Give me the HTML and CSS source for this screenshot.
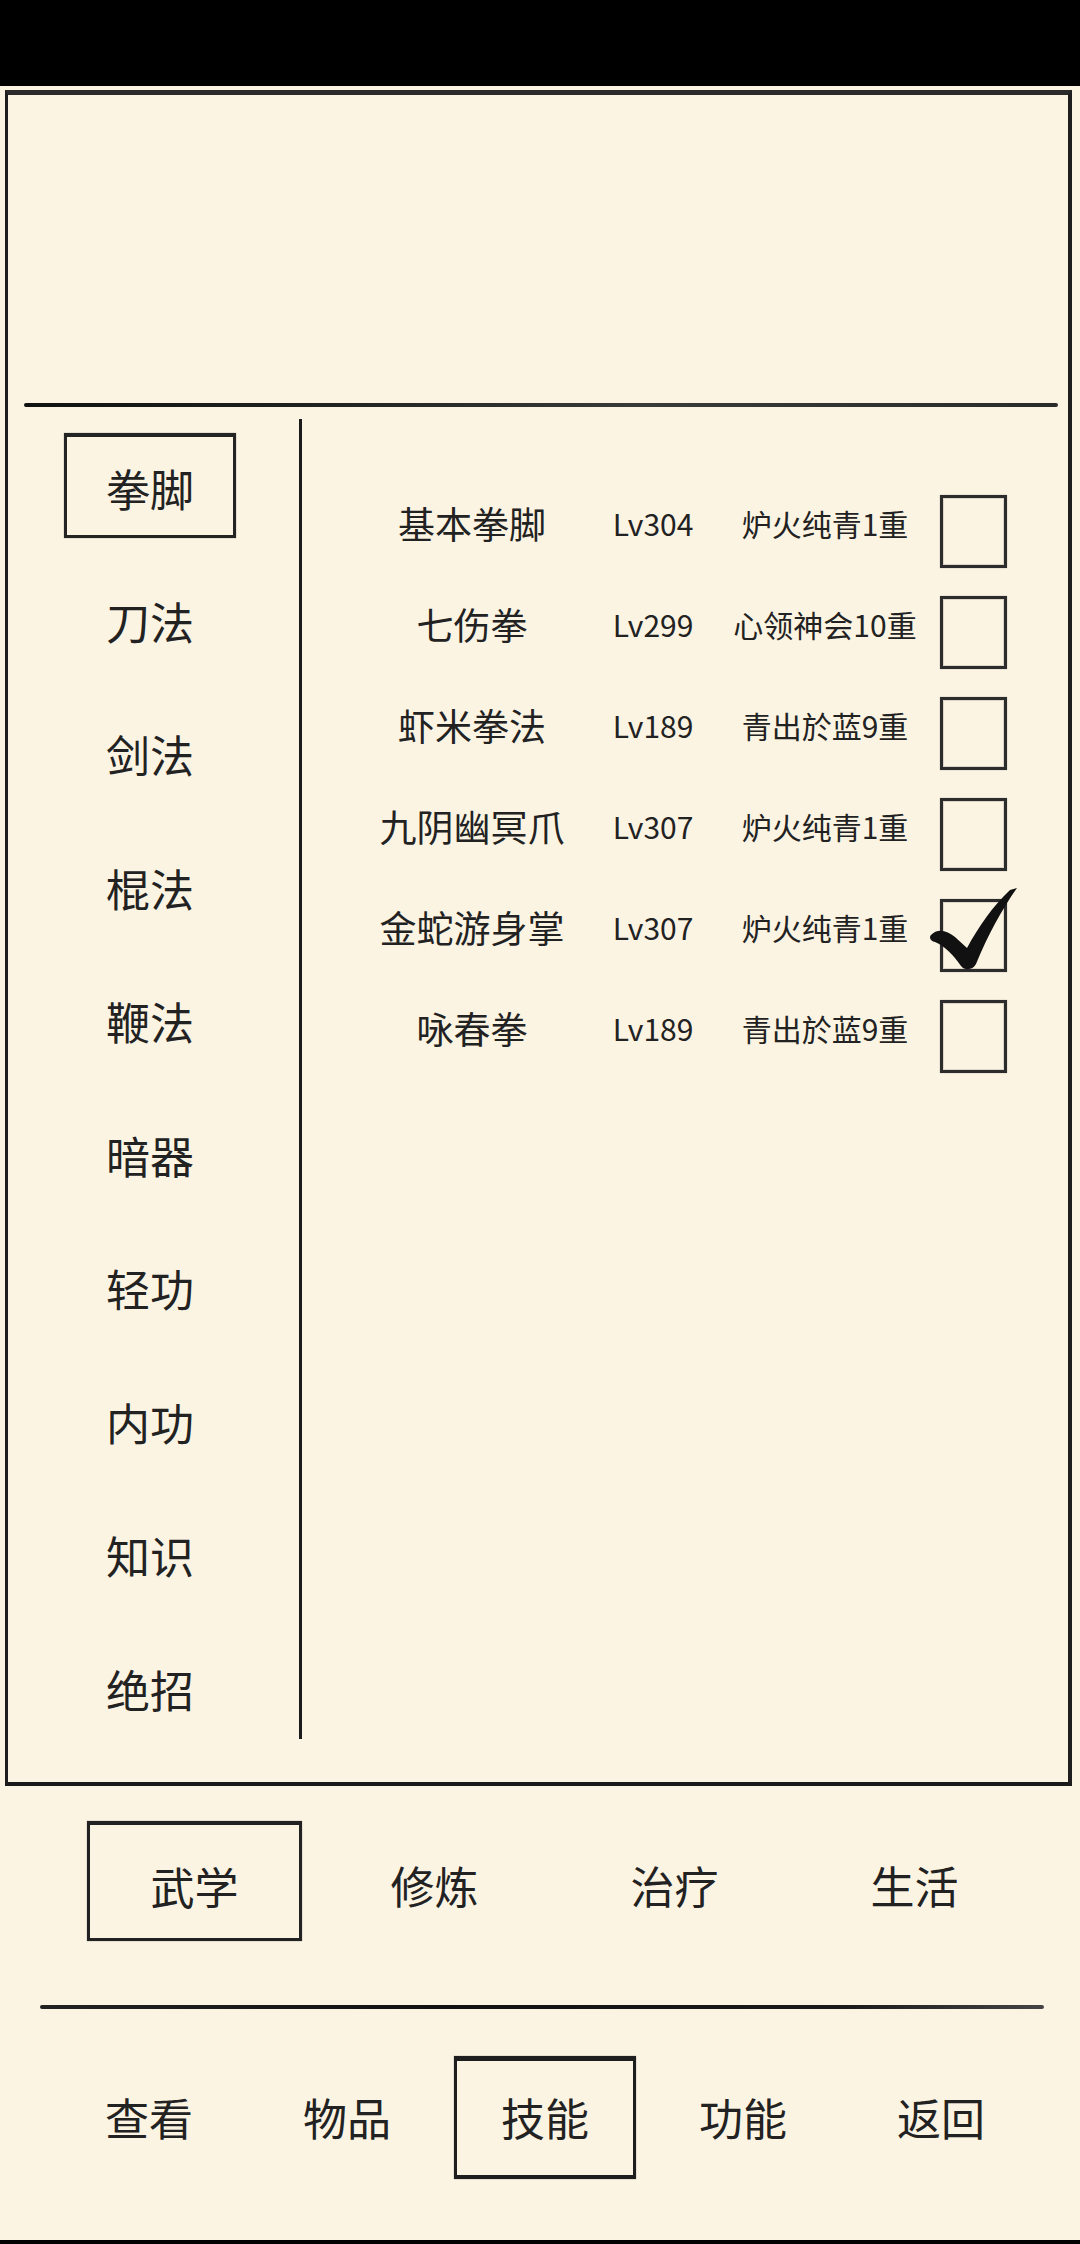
FILE: index.html
```html
<!DOCTYPE html>
<html lang="zh-CN">
<head>
  <meta charset="UTF-8">
  <meta name="viewport" content="width=device-width, initial-scale=1.0">
  <title>技能</title>
  <link rel="stylesheet" href="styles.css">
</head>
<body>
  <div class="status-bar"></div>

  <div class="panel">
    <div class="panel-top"></div>
    <div class="divider"></div>
    <div class="panel-body">
      <div class="category-list">
        <div class="category active">拳脚</div>
        <div class="category">刀法</div>
        <div class="category">剑法</div>
        <div class="category">棍法</div>
        <div class="category">鞭法</div>
        <div class="category">暗器</div>
        <div class="category">轻功</div>
        <div class="category">内功</div>
        <div class="category">知识</div>
        <div class="category">绝招</div>
      </div>
      <div class="skill-list">
        <div class="skill-row">
          <span class="skill-name">基本拳脚</span>
          <span class="skill-level">Lv304</span>
          <span class="skill-realm">炉火纯青1重</span>
          <span class="checkbox"></span>
        </div>
        <div class="skill-row">
          <span class="skill-name">七伤拳</span>
          <span class="skill-level">Lv299</span>
          <span class="skill-realm">心领神会10重</span>
          <span class="checkbox"></span>
        </div>
        <div class="skill-row">
          <span class="skill-name">虾米拳法</span>
          <span class="skill-level">Lv189</span>
          <span class="skill-realm">青出於蓝9重</span>
          <span class="checkbox"></span>
        </div>
        <div class="skill-row">
          <span class="skill-name">九阴幽冥爪</span>
          <span class="skill-level">Lv307</span>
          <span class="skill-realm">炉火纯青1重</span>
          <span class="checkbox"></span>
        </div>
        <div class="skill-row">
          <span class="skill-name">金蛇游身掌</span>
          <span class="skill-level">Lv307</span>
          <span class="skill-realm">炉火纯青1重</span>
          <span class="checkbox checked">
            <svg class="check-mark" viewBox="0 0 100 90" width="100" height="90">
              <path d="M10 50 C16 43 26 45 34 52 L46 63 C58 41 72 21 89 5 L96 3 C81 24 67 50 55 79 C52 85 44 86 40 81 C33 71 24 61 14 57 C9 56 8 52 10 50 Z" fill="#111"/>
            </svg>
          </span>
        </div>
        <div class="skill-row">
          <span class="skill-name">咏春拳</span>
          <span class="skill-level">Lv189</span>
          <span class="skill-realm">青出於蓝9重</span>
          <span class="checkbox"></span>
        </div>
      </div>
    </div>
  </div>

  <div class="tabs">
    <div class="tab active">武学</div>
    <div class="tab">修炼</div>
    <div class="tab">治疗</div>
    <div class="tab">生活</div>
  </div>

  <div class="bottom-line"></div>

  <div class="nav">
    <div class="nav-item">查看</div>
    <div class="nav-item">物品</div>
    <div class="nav-item active">技能</div>
    <div class="nav-item">功能</div>
    <div class="nav-item">返回</div>
  </div>

  <div class="nav-bar"></div>
</body>
</html>
```

FILE: styles.css
```css
body {
  margin: 0;
  width: 1080px;
  height: 2244px;
  overflow: hidden;
  background-color: #fcf4e3;
  color: #222;
  font-family: "Noto Sans CJK SC", "Noto Sans", sans-serif;
}
.status-bar {
  height: 86px;
  background-color: #000;
}
.panel {
  margin: 4px 8px 0 5px;
  height: 1687px;
  border-top: 5px solid #2a2a2a;
  border-left: 3px solid #1e1e1e;
  border-right: 4px solid #1e1e1e;
  border-bottom: 4px solid #1a1a1a;
  display: flex;
  flex-direction: column;
}
.panel-top {
  height: 308px;
}
.divider {
  height: 4px;
  margin: 0 10px 0 16px;
  background: linear-gradient(to right, #111 0%, #222 30%, #3a3a3a 60%, #2a2a2a 100%);
  border-radius: 2px;
}
.panel-body {
  display: flex;
  flex: 1;
}
.category-list {
  width: 284px;
  height: 1306px;
  margin-top: 12px;
  padding: 14px 7px 0 0;
  border-right: 3px solid #1a1a1a;
  display: flex;
  flex-direction: column;
  align-items: center;
  gap: 28.5px;
}
.category {
  width: 172px;
  height: 105px;
  box-sizing: border-box;
  border: 3px solid transparent;
  display: flex;
  align-items: center;
  justify-content: center;
  padding-top: 3px;
  font-size: 44px;
  flex-shrink: 0;
}
.category.active {
  border-color: #242424;
  border-top-width: 4px;
  box-shadow: 0 0 1px rgba(0, 0, 0, 0.5);
}
.skill-list {
  flex: 1;
  padding: 74px 0 0 50px;
}
.skill-row {
  height: 101px;
  display: grid;
  grid-template-columns: 240px 122px 222px 71px;
  align-items: center;
}
.skill-name,
.skill-level,
.skill-realm {
  text-align: center;
  padding-bottom: 18px;
  white-space: nowrap;
}
.skill-name {
  font-size: 37px;
}
.skill-level,
.skill-realm {
  font-size: 30px;
}
.checkbox {
  position: relative;
  margin-left: 4px;
  width: 67px;
  height: 73px;
  box-sizing: border-box;
  border: 3px solid #2c2c2c;
  box-shadow: inset 0 0 0 1px rgba(0, 0, 0, 0.12), 0 0 1px rgba(0, 0, 0, 0.4);
}
.check-mark {
  position: absolute;
  left: -22px;
  top: -17px;
}
.tabs {
  margin-top: 35px;
  padding-left: 87px;
  display: flex;
  gap: 25px;
}
.tab {
  width: 215px;
  height: 120px;
  box-sizing: border-box;
  border: 3px solid transparent;
  display: flex;
  align-items: center;
  justify-content: center;
  padding-top: 8px;
  font-size: 44px;
}
.tab.active {
  border-color: #222;
  border-top-width: 4px;
  box-shadow: 0 0 1px rgba(0, 0, 0, 0.5);
}
.bottom-line {
  margin: 64px 0 0 40px;
  width: 1004px;
  height: 4px;
  border-radius: 2px;
  background: linear-gradient(to right, #222 0%, #111 40%, #1a1a1a 80%, #444 100%);
}
.nav {
  margin-top: 47px;
  padding-left: 58px;
  display: flex;
  gap: 16px;
}
.nav-item {
  width: 182px;
  height: 123px;
  box-sizing: border-box;
  border: 3px solid transparent;
  display: flex;
  align-items: center;
  justify-content: center;
  padding-bottom: 2px;
  font-size: 44px;
}
.nav-item.active {
  border-color: #1e1e1e;
  border-top-width: 5px;
  border-bottom-width: 4px;
  box-shadow: 0 0 1px rgba(0, 0, 0, 0.5);
}
.nav-bar {
  margin-top: 61px;
  height: 4px;
  background-color: #000;
}
```
